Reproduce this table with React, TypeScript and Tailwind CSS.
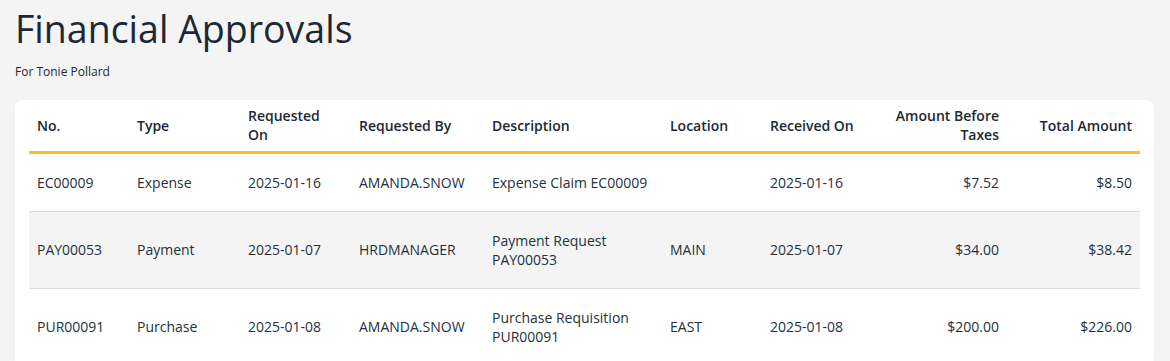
import React from 'react';

interface Approval {
  no: string;
  type: string;
  requestedOn: string;
  requestedBy: string;
  description: string[];
  location: string;
  receivedOn: string;
  amountBeforeTaxes: string;
  totalAmount: string;
}

const approvals: Approval[] = [
  {
    no: 'EC00009',
    type: 'Expense',
    requestedOn: '2025-01-16',
    requestedBy: 'AMANDA.SNOW',
    description: ['Expense Claim EC00009'],
    location: '',
    receivedOn: '2025-01-16',
    amountBeforeTaxes: '$7.52',
    totalAmount: '$8.50',
  },
  {
    no: 'PAY00053',
    type: 'Payment',
    requestedOn: '2025-01-07',
    requestedBy: 'HRDMANAGER',
    description: ['Payment Request', 'PAY00053'],
    location: 'MAIN',
    receivedOn: '2025-01-07',
    amountBeforeTaxes: '$34.00',
    totalAmount: '$38.42',
  },
  {
    no: 'PUR00091',
    type: 'Purchase',
    requestedOn: '2025-01-08',
    requestedBy: 'AMANDA.SNOW',
    description: ['Purchase Requisition', 'PUR00091'],
    location: 'EAST',
    receivedOn: '2025-01-08',
    amountBeforeTaxes: '$200.00',
    totalAmount: '$226.00',
  },
];

const App: React.FC = () => {
  return (
    <div
      className="min-h-screen bg-[#f4f4f4] px-[15px] pt-[3px]"
      style={{ fontFamily: '"Open Sans", "Noto Sans", sans-serif' }}
    >
      <h1 className="text-[37.5px] leading-[52px] font-normal text-[#1c2834]">Financial Approvals</h1>
      <p className="mt-[9px] text-[12px] leading-[16px] font-medium text-[#1c2834]">For Tonie Pollard</p>

      <div className="mt-[20px] bg-white rounded-[8px] px-[14px] mr-px">
        <table className="w-full table-fixed border-collapse text-[14px] leading-[19px] text-[#25303c]">
          <colgroup>
            <col className="w-[100px]" />
            <col className="w-[111px]" />
            <col className="w-[111px]" />
            <col className="w-[133px]" />
            <col className="w-[178px]" />
            <col className="w-[100px]" />
            <col className="w-[111px]" />
            <col className="w-[134px]" />
            <col className="w-[133px]" />
          </colgroup>
          <thead>
            <tr className="h-[52px] border-b-[3px] border-[#fbbf24] text-[#1c2834]">
              <th className="px-2 text-left font-semibold">No.</th>
              <th className="px-2 text-left font-semibold">Type</th>
              <th className="px-2 text-left font-semibold">
                Requested
                <br />
                On
              </th>
              <th className="px-2 text-left font-semibold">Requested By</th>
              <th className="px-2 text-left font-semibold">Description</th>
              <th className="px-2 text-left font-semibold">Location</th>
              <th className="px-2 text-left font-semibold">Received On</th>
              <th className="px-2 text-right font-semibold">
                Amount Before
                <br />
                Taxes
              </th>
              <th className="px-2 text-right font-semibold">Total Amount</th>
            </tr>
          </thead>
          <tbody>
            {approvals.map((a, i) => (
              <tr
                key={a.no}
                className={`border-b border-[#dcdcdc] ${i % 2 === 1 ? 'bg-[#f4f4f4]' : 'bg-white'}`}
              >
                <td className="px-2 py-[19px]">{a.no}</td>
                <td className="px-2 py-[19px]">{a.type}</td>
                <td className="px-2 py-[19px]">{a.requestedOn}</td>
                <td className="px-2 py-[19px]">{a.requestedBy}</td>
                <td className="px-2 py-[19px] whitespace-nowrap">
                  {a.description.map((line) => (
                    <div key={line}>{line}</div>
                  ))}
                </td>
                <td className="px-2 py-[19px]">{a.location}</td>
                <td className="px-2 py-[19px]">{a.receivedOn}</td>
                <td className="px-2 py-[19px] text-right">{a.amountBeforeTaxes}</td>
                <td className="px-2 py-[19px] text-right">{a.totalAmount}</td>
              </tr>
            ))}
          </tbody>
        </table>
      </div>
    </div>
  );
};

export default App;
